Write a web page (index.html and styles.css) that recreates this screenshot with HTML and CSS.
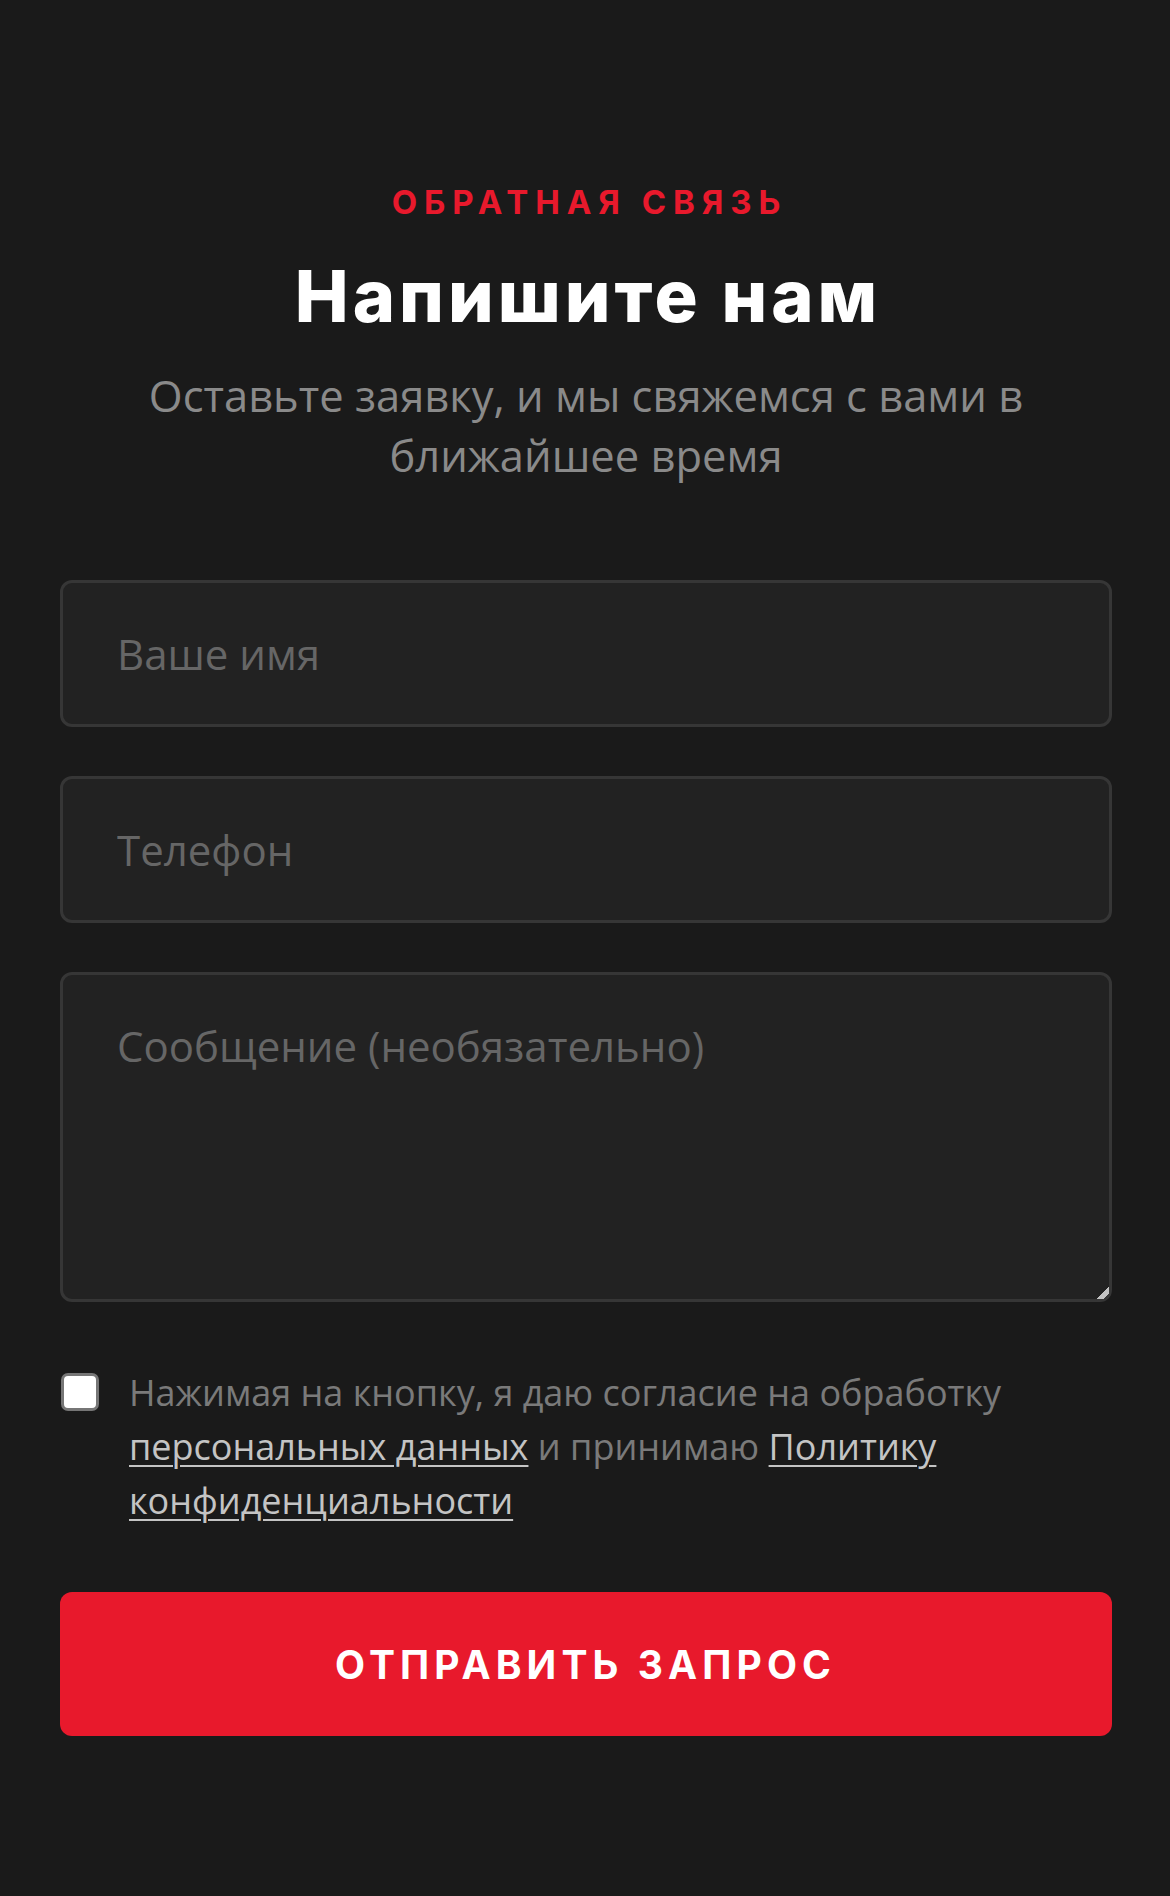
FILE: index.html
```html
<!DOCTYPE html>
<html lang="ru">

<head>
    <meta charset="UTF-8">
    <meta name="viewport" content="width=device-width, initial-scale=1.0">
    <title>Обратная связь</title>
    <link rel="stylesheet" href="styles.css">
</head>

<body>
    <section class="feedback">
        <p class="eyebrow">Обратная связь</p>
        <h1 class="title">Напишите нам</h1>
        <p class="lead">Оставьте заявку, и мы свяжемся с вами в ближайшее время</p>

        <form class="form" onsubmit="return false">
            <input class="field" type="text" placeholder="Ваше имя">
            <input class="field" type="tel" placeholder="Телефон">
            <textarea class="field field-area" placeholder="Сообщение (необязательно)"></textarea>

            <label class="consent">
                <input class="consent-box" type="checkbox">
                <span class="consent-text">Нажимая на кнопку, я даю согласие на обработку
                    <a href="#">персональных данных</a> и принимаю <a href="#">Политику
                    конфиденциальности</a></span>
            </label>

            <button class="submit" type="submit">Отправить запрос</button>
        </form>
    </section>
</body>

</html>
```

FILE: styles.css
```css
* {
    box-sizing: border-box;
    margin: 0;
}

body {
    background-color: #1a1a1a;
    font-family: 'Open Sans', 'Noto Sans', sans-serif;
    color: #8a8a8a;
}

.feedback {
    padding: 182px 58px 160px 60px;
    text-align: center;
}

.eyebrow {
    font-family: Inter, 'DejaVu Sans', sans-serif;
    font-size: 33px;
    line-height: 41px;
    font-weight: 700;
    letter-spacing: 6.9px;
    padding-left: 6.9px;
    text-transform: uppercase;
    color: #e8192c;
}

.title {
    margin-top: 30px;
    padding-left: 4px;
    font-family: Inter, 'DejaVu Sans', sans-serif;
    font-size: 72px;
    line-height: 86px;
    font-weight: 800;
    letter-spacing: 4px;
    color: #ffffff;
}

.lead {
    max-width: 980px;
    margin: 27px auto 0;
    font-size: 43.5px;
    line-height: 60px;
    color: #8a8a8a;
}

.form {
    display: flex;
    flex-direction: column;
    margin-top: 94px;
    text-align: left;
}

.field {
    width: 100%;
    height: 147px;
    padding: 0 54px;
    border: 3px solid #363636;
    border-radius: 12px;
    background-color: #222222;
    font-family: 'Open Sans', 'Noto Sans', sans-serif;
    font-size: 42px;
    color: #dddddd;
    outline: none;
}

.field + .field {
    margin-top: 49px;
}

.field::placeholder {
    color: #666666;
}

.field-area {
    height: 330px;
    padding: 42px 54px;
    resize: vertical;
}

.field-area::-webkit-resizer {
    background: linear-gradient(135deg, transparent 58%, #c2c2c2 58%, #c2c2c2 82%, transparent 82%);
}

.consent {
    display: flex;
    gap: 30px;
    margin-top: 64px;
    font-size: 36px;
    line-height: 54px;
    color: #7a7a7a;
}

.consent-box {
    flex: none;
    appearance: none;
    width: 38px;
    height: 38px;
    margin: 7px 0 0 1px;
    border: 3px solid #767676;
    border-radius: 7px;
    background-color: #ffffff;
}

.consent-text a {
    color: #c4c4c4;
    text-decoration-thickness: 2px;
    text-underline-offset: 5px;
}

.submit {
    height: 144px;
    margin-top: 64px;
    border: none;
    border-radius: 12px;
    background-color: #e8192c;
    font-family: Inter, 'DejaVu Sans', sans-serif;
    font-size: 39px;
    font-weight: 700;
    letter-spacing: 5.1px;
    padding-left: 5.1px;
    text-transform: uppercase;
    color: #ffffff;
}
```
